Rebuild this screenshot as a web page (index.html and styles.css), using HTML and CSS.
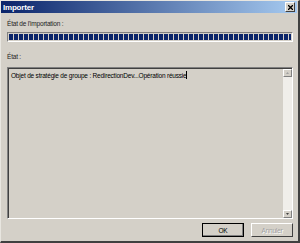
FILE: index.html
```html
<!DOCTYPE html>
<html lang="fr">
<head>
    <meta charset="UTF-8">
    <title>Importer</title>
    <link rel="stylesheet" href="styles.css">
</head>
<body>
    <div class="window">
        <div class="titlebar">
            <span class="title">Importer</span>
            <span class="close">
                <svg width="5" height="5" viewBox="0 0 5 5"><path d="M0 0L5 5M5 0L0 5" stroke="#000" stroke-width="1.3"/></svg>
            </span>
        </div>
        <div class="content">
            <div class="label">État de l'importation :</div>
            <div class="progress">
                <div class="chunks"></div>
            </div>
            <div class="label status">État :</div>
            <div class="listbox">
                <div class="items">
                    <div class="item">Objet de stratégie de groupe : RedirectionDev...Opération réussie<span class="caret"></span></div>
                </div>
                <div class="scrollbar">
                    <div class="arrow">
                        <svg width="3" height="2" viewBox="0 0 3 2"><path d="M0 2L1.5 0L3 2Z" fill="#a0a0a0"/></svg>
                    </div>
                    <div class="track"></div>
                    <div class="arrow">
                        <svg width="3" height="2" viewBox="0 0 3 2"><path d="M0 0L1.5 2L3 0Z" fill="#404040"/></svg>
                    </div>
                </div>
            </div>
            <div class="buttons">
                <button class="btn default">OK</button>
                <button class="btn" disabled>Annuler</button>
            </div>
        </div>
    </div>
</body>
</html>
```

FILE: styles.css
```css
body {
    margin: 0;
    font-family: "Liberation Sans", Arial, sans-serif;
    font-size: 6.5px;
    letter-spacing: -0.2px;
    color: #000;
}
.window {
    width: 300px;
    height: 243px;
    box-sizing: border-box;
    background: #d4d0c8;
    border-top: 1px solid #e8e6e0;
    border-left: 1px solid #e8e6e0;
    border-right: 2px solid #404040;
    border-bottom: 2px solid #404040;
    display: flex;
    flex-direction: column;
}
.titlebar {
    height: 12px;
    margin: 0 1px 0 0;
    background: linear-gradient(to right, #0a246a, #a6caf0);
    display: flex;
    align-items: center;
    justify-content: space-between;
    padding: 0 2px 0 2px;
}
.title {
    color: #fff;
    font-weight: bold;
    font-size: 8px;
    letter-spacing: -0.2px;
}
.close {
    width: 8px;
    height: 8px;
    background: #d4d0c8;
    border-top: 1px solid #fff;
    border-left: 1px solid #fff;
    border-right: 1px solid #404040;
    border-bottom: 1px solid #404040;
    display: flex;
    align-items: center;
    justify-content: center;
}
.content {
    flex: 1;
    display: flex;
    flex-direction: column;
    padding: 6px 5px 4px 6px;
}
.label {
    color: #222;
    height: 10px;
    line-height: 10px;
}
.status {
    margin-top: 10px;
}
.progress {
    margin-top: 3px;
    height: 10px;
    box-sizing: border-box;
    border-top: 1px solid #808080;
    border-left: 1px solid #808080;
    border-right: 1px solid #fff;
    border-bottom: 1px solid #fff;
    padding: 1px;
}
.chunks {
    height: 100%;
    background: repeating-linear-gradient(to right, #0a246a 0, #0a246a 4px, #d4d0c8 4px, #d4d0c8 5px);
}
.listbox {
    flex: 1;
    margin-top: 5px;
    display: flex;
    border-top: 1px solid #808080;
    border-left: 1px solid #808080;
    border-right: 1px solid #fff;
    border-bottom: 1px solid #fff;
}
.items {
    flex: 1;
    border-top: 1px solid #404040;
    border-left: 1px solid #404040;
    padding: 2px 2px;
}
.item {
    line-height: 9px;
}
.caret {
    display: inline-block;
    width: 1px;
    height: 8px;
    background: #000;
    vertical-align: -1px;
}
.scrollbar {
    width: 9px;
    display: flex;
    flex-direction: column;
    border-top: 1px solid #404040;
}
.arrow {
    height: 8px;
    box-sizing: border-box;
    background: #d4d0c8;
    border-top: 1px solid #fff;
    border-left: 1px solid #fff;
    border-right: 1px solid #808080;
    border-bottom: 1px solid #808080;
    display: flex;
    align-items: center;
    justify-content: center;
}
.track {
    flex: 1;
    background: #f0eeea;
}
.buttons {
    display: flex;
    justify-content: flex-end;
    gap: 7px;
    margin-top: 4px;
}
.btn {
    width: 42px;
    height: 14px;
    padding: 0;
    font-family: "Liberation Sans", Arial, sans-serif;
    font-size: 6.5px;
    letter-spacing: -0.2px;
    background: #d4d0c8;
    border-top: 1px solid #fff;
    border-left: 1px solid #fff;
    border-right: 1px solid #404040;
    border-bottom: 1px solid #404040;
}
.default {
    outline: 1px solid #000;
    outline-offset: -1px;
    border-right-color: #000;
    border-bottom-color: #000;
    box-shadow: inset -1px -1px #808080;
}
.btn:disabled {
    color: #a0a0a0;
    text-shadow: 1px 1px #fff;
}
```
